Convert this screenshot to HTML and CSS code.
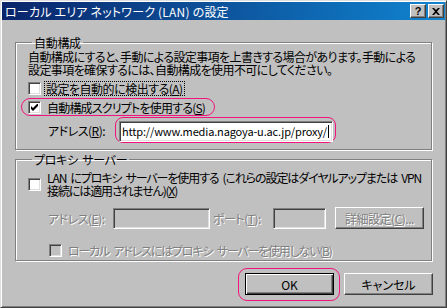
FILE: index.html
```html
<!DOCTYPE html>
<html lang="ja">
<head>
    <meta charset="UTF-8">
    <title>ローカル エリア ネットワーク (LAN) の設定</title>
    <link rel="stylesheet" href="styles.css">
</head>
<body>
    <div class="window">
        <div class="titlebar">
            <span class="title">ローカル エリア ネットワーク (LAN) の設定</span>
            <div class="title-buttons">
                <span class="tbtn help">?</span>
                <span class="tbtn">
                    <svg width="8" height="7" viewBox="0 0 8 7"><path d="M0 0h2l2 2 2-2h2L5 3.5 8 7H6L4 5 2 7H0l3-3.5z" fill="#000"/></svg>
                </span>
            </div>
        </div>

        <div class="content">
            <fieldset class="group">
                <legend>自動構成</legend>
                <p class="note">自動構成にすると、手動による設定事項を上書きする場合があります。手動による<br>設定事項を確保するには、自動構成を使用不可にしてください。</p>

                <div class="check-row first">
                    <span class="checkbox"></span>
                    <span class="focus">設定を自動的に検出する(<u>A</u>)</span>
                </div>

                <div class="check-row mark mark-row">
                    <span class="checkbox">
                        <svg width="7" height="7" viewBox="0 0 7 7"><path d="M0 2v3l2 2 5-5V-1L2 4z" fill="#000"/></svg>
                    </span>
                    <span class="script-label">自動構成スクリプトを使用する(<u>S</u>)</span>
                </div>

                <div class="field-row script-row">
                    <span class="field-label">アドレス(<u>R</u>):</span>
                    <span class="mark mark-input">
                        <span class="textbox script-url">http://www.media.nagoya-u.ac.jp/proxy/<span class="caret"></span></span>
                    </span>
                </div>
            </fieldset>

            <fieldset class="group proxy">
                <legend>プロキシ サーバー</legend>

                <div class="check-row lan-row">
                    <span class="checkbox"></span>
                    <span class="lan-label">LAN にプロキシ サーバーを使用する (これらの設定はダイヤルアップまたは VPN<br>接続には適用されません)(<u>X</u>)</span>
                </div>

                <div class="field-row proxy-row disabled">
                    <span class="field-label addr-label">アドレス(<u>E</u>):</span>
                    <span class="textbox addr-box"></span>
                    <span class="field-label port-label">ポート(<u>T</u>):</span>
                    <span class="textbox port-box"></span>
                    <span class="button advanced">詳細設定(<u>C</u>)...</span>
                </div>

                <div class="check-row bypass-row disabled">
                    <span class="checkbox off"></span>
                    <span class="bypass-label">ローカル アドレスにはプロキシ サーバーを使用しない(<u>B</u>)</span>
                </div>
            </fieldset>

            <div class="actions">
                <span class="mark mark-button">
                    <span class="button default">OK</span>
                </span>
                <span class="button">キャンセル</span>
            </div>
        </div>
    </div>
</body>
</html>
```

FILE: styles.css
```css
html, body {
    margin: 0;
    padding: 0;
    background: #c0c0c0;
}
body {
    font-family: "Noto Sans CJK JP", "Liberation Sans", sans-serif;
    font-size: 12px;
    line-height: 13px;
    font-feature-settings: "palt";
    color: #000;
}
u {
    text-decoration: underline;
    text-underline-offset: 1px;
}

.window {
    box-sizing: border-box;
    width: 447px;
    height: 308px;
    background: #c0c0c0;
    border: 1px solid;
    border-color: #dfdfdf #404040 #404040 #dfdfdf;
    box-shadow: inset 1px 1px #fff, inset -1px -1px #808080;
    padding: 1px;
    overflow: hidden;
}

/* title bar */
.titlebar {
    height: 18px;
    display: flex;
    align-items: center;
    justify-content: space-between;
    background: linear-gradient(to right, #0a246a, #1084d0);
    color: #fff;
    padding: 0 1px 0 3px;
}
.title {
    white-space: nowrap;
    letter-spacing: 0.2px;
}
.title-buttons {
    display: flex;
    gap: 2px;
}
.tbtn {
    box-sizing: border-box;
    width: 16px;
    height: 14px;
    display: flex;
    align-items: center;
    justify-content: center;
    background: #c0c0c0;
    border: 1px solid;
    border-color: #fff #404040 #404040 #fff;
    box-shadow: inset -1px -1px #808080;
    color: #000;
    font-family: "Liberation Sans", sans-serif;
    font-weight: bold;
    font-size: 11px;
}

.content {
    padding: 16px 12px 0 13px;
}

/* group boxes */
.group {
    margin: 0;
    min-width: 0;
    width: 417px;
    box-sizing: border-box;
    padding: 1px 12px 6px;
    border: 1px solid #808080;
    box-shadow: inset 1px 1px #fff, 1px 1px #fff;
}
.group legend {
    padding: 0 2px;
    margin-left: 4px;
    letter-spacing: -0.3px;
    word-spacing: 2px;
}
.group.proxy {
    margin-top: 3px;
    padding-top: 5px;
    padding-bottom: 2px;
}
.note {
    margin: 0;
    white-space: nowrap;
    letter-spacing: -0.6px;
}

/* checkboxes */
.check-row {
    display: flex;
    align-items: center;
    gap: 6px;
    height: 15px;
    white-space: nowrap;
}
.check-row.first {
    margin-top: 5px;
}
.checkbox {
    box-sizing: border-box;
    width: 13px;
    height: 13px;
    flex: none;
    display: flex;
    align-items: center;
    justify-content: center;
    background: #fff;
    border: 1px solid;
    border-color: #808080 #fff #fff #808080;
    box-shadow: inset 1px 1px #404040, inset -1px -1px #dfdfdf;
}
.checkbox.off {
    background: #c0c0c0;
}
.focus {
    outline: 1px dotted #000;
    outline-offset: 0;
    padding: 0 1px;
    margin-left: -2px;
    letter-spacing: -0.5px;
}
.script-label {
    letter-spacing: -0.8px;
}
.lan-label {
    letter-spacing: -1.1px;
    word-spacing: 2.5px;
}
.bypass-label {
    letter-spacing: -1.2px;
    word-spacing: 3px;
}

/* highlight marks */
.mark {
    border: 1px solid #f0147c;
    border-radius: 9px;
}
.mark-row {
    width: fit-content;
    height: 14px;
    margin: 2px 0 0 -7px;
    padding: 1px 9px 1px 6px;
}
.mark-input {
    display: inline-flex;
    padding: 3px 2px 0 3px;
    border-radius: 8px;
    margin-left: -4px;
}
.mark-button {
    display: inline-flex;
    padding: 4px 5px 5px 6px;
    margin: -5px -6px -6px -7px;
    border-radius: 9px;
}

/* text fields */
.field-row {
    display: flex;
    align-items: center;
    white-space: nowrap;
}
.field-label {
    box-sizing: border-box;
    flex: none;
    letter-spacing: -0.5px;
}
.script-row {
    margin-top: 1px;
    padding-left: 20px;
}
.script-row .field-label {
    width: 71px;
}
.textbox {
    box-sizing: border-box;
    flex: none;
    height: 21px;
    display: flex;
    align-items: center;
    background: #fff;
    border: 1px solid;
    border-color: #808080 #fff #fff #808080;
    box-shadow: inset 1px 1px #404040, inset -1px -1px #dfdfdf;
    padding: 0 2px;
    overflow: hidden;
}
.script-url {
    width: 214px;
    font-size: 11px;
    letter-spacing: -0.15px;
}
.caret {
    display: inline-block;
    width: 1px;
    height: 13px;
    background: #000;
    margin-left: 1px;
}

.lan-row {
    height: 26px;
    align-items: center;
}
.proxy-row {
    margin-top: 10px;
    padding-left: 20px;
}
.proxy-row .addr-label {
    width: 65px;
}
.proxy-row .port-label {
    width: 63px;
    padding-left: 3px;
}
.addr-box {
    width: 97px;
    background: #c0c0c0;
}
.port-box {
    width: 53px;
    background: #c0c0c0;
}
.bypass-row {
    margin-top: 14px;
    padding-left: 21px;
}

.disabled {
    color: #808080;
    text-shadow: 1px 1px 0 #fff;
}

/* buttons */
.button {
    box-sizing: border-box;
    flex: none;
    width: 89px;
    height: 22px;
    display: inline-flex;
    align-items: center;
    justify-content: center;
    background: #c0c0c0;
    border: 1px solid;
    border-color: #fff #404040 #404040 #fff;
    box-shadow: inset -1px -1px #808080;
    white-space: nowrap;
}
.advanced {
    margin-left: 9px;
    width: 89px;
    letter-spacing: -0.5px;
}
.button.default {
    border: 1px solid #000;
    box-shadow: inset 1px 1px #fff, inset -1px -1px #404040, inset -2px -2px #808080;
}
.actions {
    display: flex;
    justify-content: flex-end;
    gap: 10px;
    margin-top: 12px;
    width: 418px;
}
```
